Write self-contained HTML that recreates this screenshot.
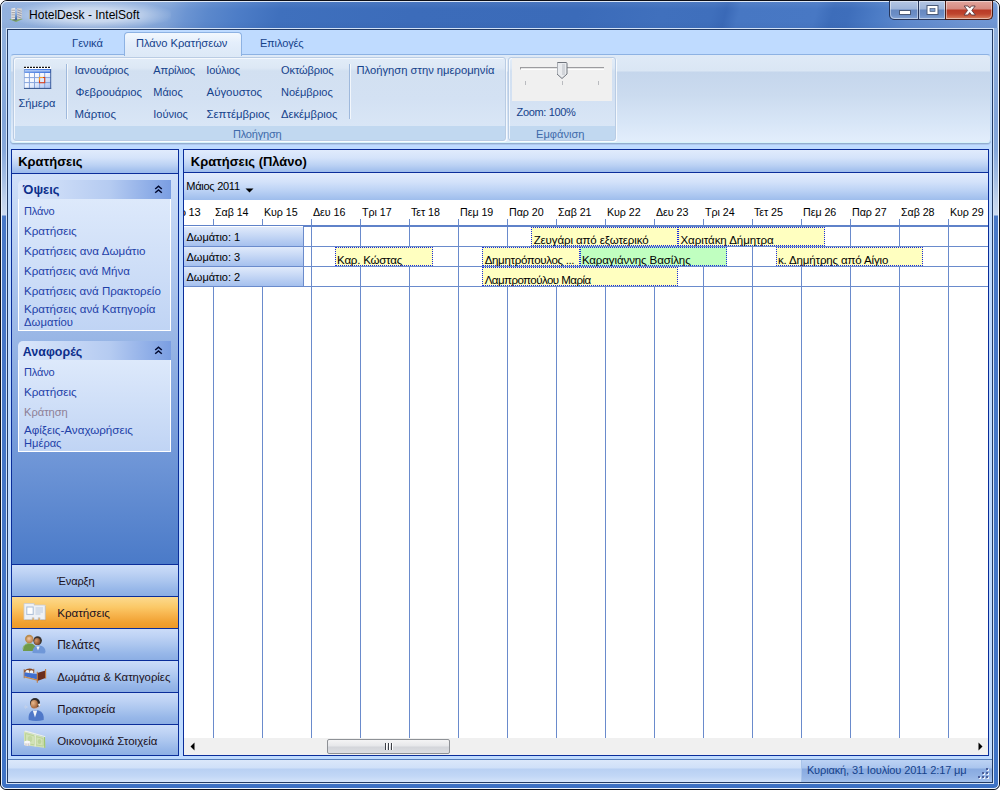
<!DOCTYPE html>
<html lang="el">
<head>
<meta charset="utf-8">
<title>HotelDesk - IntelSoft</title>
<style>
html,body{margin:0;padding:0;background:#fff;}
body{width:1000px;height:790px;position:relative;overflow:hidden;font-family:"Liberation Sans",sans-serif;font-size:11.5px;}
div,span,svg{position:absolute;box-sizing:border-box;}
.t{white-space:nowrap;line-height:16px;height:16px;}
/* window frame */
#win{left:0;top:0;width:1000px;height:790px;border:1px solid #0c0e16;border-radius:7px 7px 6px 6px;
 background:linear-gradient(180deg,#a3bee5 0px,#9fbbe3 175px,#5a88cf 200px,#4b7dcb 230px,#3f73c5 770px,#3c70c3 790px);
 box-shadow:inset 0 0 0 1px rgba(225,236,250,.85);overflow:hidden;}
#title{left:1px;top:1px;width:996px;height:27px;background:linear-gradient(105deg,#92b1de 0px,#8eaedd 140px,#7fa3d8 165px,#6b94d2 182px,#5b88cc 203px,#4d7dc7 232px,#3f70bd 272px,#3c6cba 400px,#3b6bb9 560px,#4070bd 640px,#3f6fbc 690px,#3a69b7 703px,#4777c3 716px,#4878c4 790px,#3d6dba 806px,#3e6ebb 822px,#4c7cc6 850px,#5e89cd 880px,#6e95d3 940px,#7399d5 996px);}
#titleshine{left:1px;top:1px;width:996px;height:27px;background:linear-gradient(180deg,rgba(255,255,255,.08) 0,rgba(255,255,255,0) 8px,rgba(0,0,40,0) 20px,rgba(0,0,40,.03) 27px);}
#glow{left:10px;top:0px;width:160px;height:28px;border-radius:14px;background:radial-gradient(ellipse at center,rgba(255,255,255,.62) 0,rgba(255,255,255,.5) 35%,rgba(255,255,255,.18) 60%,rgba(255,255,255,0) 75%);}
#cedge{left:6px;top:28px;width:988px;height:756px;border:1px solid #d3e2f6;}
#cedge2{left:7px;top:29px;width:986px;height:754px;border:1px solid #223a63;}
#client{left:8px;top:30px;width:984px;height:752px;background:#bfdbff;overflow:hidden;}
/* caption buttons */
.cb{top:1px;height:19px;border:1px solid #26355a;border-top:none;}
#bmin{left:889px;width:30px;border-radius:0 0 0 5px;background:linear-gradient(180deg,#b4c6e3 0,#9db4d9 8px,#6688c0 9px,#6c8ec6 14px,#84a5d6 18px);}
#bmax{left:918px;width:28px;background:linear-gradient(180deg,#b4c6e3 0,#9db4d9 8px,#6688c0 9px,#6c8ec6 14px,#84a5d6 18px);}
#bcls{left:945px;width:48px;border-radius:0 0 5px 0;border-color:#4a1c14;background:linear-gradient(180deg,#e2a59d 0,#d68a80 8px,#b93a26 9px,#bf452e 13px,#cf6a4c 16px,#d8886a 18px);}
.cbi{box-shadow:inset 0 0 0 1px rgba(255,255,255,.45);left:0;top:0;right:0;bottom:0;border-radius:inherit;}
/* ribbon */
#tabsel{left:124px;top:32px;width:118px;height:24px;border:1px solid #8db2e3;border-bottom:none;border-radius:4px 4px 0 0;background:linear-gradient(180deg,#f3f8fe 0,#e4eefb 10px,#dde9f7 22px);}
#ribbon{left:10px;top:54px;width:981px;height:89px;border:1px solid #8db2e3;border-color:#8db2e3 #b9d6f3 #d6f3fb #b9d6f3;border-radius:4px;background:linear-gradient(180deg,#dfeaf7 0,#dae6f4 16px,#c5d6ec 17px,#cbdbef 40px,#d8e6f7 68px,#e3eefc 88px);box-shadow:0 1px 0 #93accf, 0 2px 0 #adc8ee;}
.grp{top:57px;height:84px;border:1px solid #b9cce4;border-radius:3px;background:linear-gradient(180deg,#e2ecf8 0,#dde8f5 10px,#d2e0f1 13px,#d3e1f3 40px,#d9e6f6 68px,#c1d8f0 68px,#c1d8f0 84px);box-shadow:1px 1px 0 rgba(255,255,255,.75), inset 1px 1px 0 rgba(255,255,255,.7);}
.sep{width:1px;top:64px;height:55px;background:#9fb9dc;box-shadow:1px 0 0 rgba(255,255,255,.7);}
/* panels */
.panel{border:1px solid #0a2d9a;}
.phead{left:0;top:0;right:0;height:22px;background:linear-gradient(180deg,#e0ebfc 0,#d4e3fa 8px,#bcd2f4 15px,#9dbcec 22px);border-bottom:1px solid #0a2d9a;height:23px;}
#lbody{left:0;top:24px;width:166px;height:390px;background:linear-gradient(180deg,#d0e0f9 0,#9ab7e6 160px,#6f96d7 285px,#4a7ac8 391px);}
.ghead{left:6px;width:153px;height:19px;border-radius:5px 0 0 0;background:linear-gradient(90deg,#dbe7fb 0,#b5cbf1 60%,#7a9ee2 100%);}
.gbody{left:6px;width:153px;border:1px solid #fff;border-top:none;background:linear-gradient(180deg,#dde9fb 0,#c0d4f4 100%);}
.nav{left:0;width:166px;height:32px;border-top:1px solid #0a2d9a;background:linear-gradient(180deg,#cbdcf8 0,#bdd2f4 8px,#a9c4ee 17px,#98b8e9 24px,#8caee4 31px);}
.nav.sel{background:linear-gradient(180deg,#fcd98e 0,#fbc968 10px,#f7b34c 18px,#f0a030 26px,#ee9a28 31px);}
/* main */
#mtool{left:0;top:23px;width:804px;height:27px;background:linear-gradient(180deg,#e1ebfc 0,#d3e2fa 9px,#bdd3f5 17px,#9ebdec 27px);}
#mgrid{left:0;top:50px;width:804px;height:538px;background:#fff;overflow:hidden;}
.vl{top:0;width:1px;background:#6a8bcc;}
.hl{left:0;height:1px;background:#6a8bcc;}
.rh{left:0;width:120px;height:19px;border-right:1px solid #6a8bcc;background:linear-gradient(180deg,#e0eafb 0,#c5d7f5 9px,#a5c0ee 19px);}
.bk{height:19px;border:1px dotted #1a2be0;background:#ffffc0;}
#scroll{left:0;top:588px;width:804px;height:17px;background:#f0f0f0;}
#thumb{left:143px;top:1px;width:123px;height:15px;border:1px solid #8e9196;border-radius:2px;background:linear-gradient(180deg,#f4f4f5 0,#e6e7ea 6px,#d3d5da 7px,#dfe0e4 14px);}
#status{left:0;top:729px;width:984px;height:23px;border-top:1px solid #567db8;background:linear-gradient(180deg,#dbe8fa 0,#cfe0f8 8px,#b8d0f3 9px,#c2d7f6 16px,#d3e3fa 22px);}
#sdate{left:793px;top:0;width:191px;height:22px;border-left:1px solid #a9c4ea;background:linear-gradient(180deg,#bdd3f4 0,#aac5ee 8px,#88aae0 9px,#93b3e5 16px,#a3c0eb 22px);}
</style>
</head>
<body>
<div id="win">
 <div id="title" style="left:0;top:0"></div>
 <div id="glow"></div>
 <div id="titleshine" style="left:0;top:0"></div>
</div>
<div style="left:2px;top:28px;width:4px;height:757px;background:linear-gradient(180deg,#90b0dd 0,#82a5d9 92px,#86a8da 122px,#a5bfe4 152px,#c0d2ec 172px,#cddbef 187px,#4878c6 188px,#3f73c5 757px)"></div>
<div style="left:994px;top:28px;width:4px;height:757px;background:linear-gradient(180deg,#90b0dd 0,#82a5d9 92px,#86a8da 122px,#a5bfe4 152px,#c0d2ec 172px,#cddbef 187px,#4878c6 188px,#3f73c5 757px)"></div>
<div style="left:1px;top:1px;width:998px;height:788px;border:1px solid rgba(240,246,253,.88);border-radius:6px 6px 5px 5px"></div>
<div id="cedge"></div>
<div id="cedge2"></div>
<!-- caption buttons -->
<div id="bmin" class="cb"><div class="cbi"></div><svg width="30" height="19" style="left:-1px;top:0"><rect x="10.5" y="9.5" width="11" height="4" fill="#fff" stroke="#4a5a78" stroke-width="1"/></svg></div>
<div id="bmax" class="cb"><div class="cbi"></div><svg width="28" height="19" style="left:-1px;top:0"><rect x="9" y="4.5" width="11" height="9" fill="#fff" stroke="#4a5a78" stroke-width="1"/><rect x="12" y="7.500" width="5" height="3" fill="#7f9fd0" stroke="#4a5a78" stroke-width=".7"/></svg></div>
<div id="bcls" class="cb"><div class="cbi"></div><svg width="48" height="19" style="left:-1px;top:0"><path transform="translate(1.2,0.8)" d="M18 4.2 L21.800 4.2 L23.500 6.300 L25.200 4.2 L29 4.2 L25.600 8.600 L29.200 13.200 L25.300 13.200 L23.500 10.800 L21.700 13.200 L17.800 13.200 L21.400 8.600 Z" fill="#fff" stroke="#5a3a40" stroke-width=".9"/></svg></div>
<!-- app icon -->
<svg width="16" height="16" style="left:8px;top:7px" viewBox="0 0 16 16"><defs><linearGradient id="ab" x1="0" y1="0" x2="0" y2="1"><stop offset="0" stop-color="#b4cdee"/><stop offset=".5" stop-color="#7fa6dc"/><stop offset="1" stop-color="#34609f"/></linearGradient></defs>
<path d="M1.200 12.300 L7.600 10.800 L14.800 12 L8 15 Z" fill="#7fa868"/><path d="M3.500 12.400 L7.500 11.500 L10 12.800 L7 14 Z" fill="#5f6a78" opacity=".7"/>
<path d="M3.300 1.600 L7.200 0.800 L7.200 12 L3.300 12.600 Z" fill="#e6e6e6"/>
<path d="M9 1.200 L13.800 1.600 L13.800 11.600 L9 12.600 Z" fill="#d6d2cf"/>
<path d="M7.100 2 L9.100 2 L9.100 12.800 L7.100 12.800 Z" fill="url(#ab)"/>
<path d="M3.500 3.300h3.500M3.500 5.600h3.500M3.500 7.900h3.500M3.500 10.200h3.500" stroke="#a9a9ad" stroke-width="1.100"/>
<path d="M9.300 2.800l4.300 1.500M9.300 5.100l4.300 1.500M9.300 7.400l4.300 1.500M9.300 9.700l4.300 1.500" stroke="#8f98b4" stroke-width="1"/></svg>

<div id="client">
 <!-- everything inside client is offset by (8,30) -->
</div>

<!-- ribbon -->
<div id="ribbon"></div>
<div id="tabsel"></div>
<div class="grp" style="left:13px;width:493px"></div>
<div class="grp" style="left:508px;width:108px"></div>
<div class="sep" style="left:66px"></div>
<div class="sep" style="left:349px"></div>
<!-- calendar icon -->
<svg width="30" height="26" style="left:23px;top:65px" viewBox="0 0 30 26">
 <defs><linearGradient id="cg" x1="0" y1="0" x2="1" y2="1"><stop offset="0" stop-color="#ffffff"/><stop offset=".45" stop-color="#f2f6fe"/><stop offset="1" stop-color="#9fbcf2"/></linearGradient>
 <linearGradient id="ch" x1="0" y1="0" x2="1" y2="0"><stop offset="0" stop-color="#6f9aea"/><stop offset="1" stop-color="#3f74de"/></linearGradient></defs>
 <rect x="1" y="1.600" width="27" height="2.600" fill="#fff"/>
 <path d="M1 2.400h27" stroke="#111" stroke-width="1.300" stroke-dasharray="2 1"/>
 <rect x="1" y="4" width="27" height="4" fill="url(#ch)"/>
 <rect x="2" y="5" width="25" height="1.600" fill="#b4ccf5" opacity=".85"/>
 <rect x="1" y="8" width="27" height="15.500" fill="url(#cg)"/>
 <path d="M6.400 8v15.500M11.500 8v15.500M16.600 8v15.500M21.700 8v15.500M1 12.600h27M1 17.600h27" stroke="#86a4dc" stroke-width="1"/>
 <path d="M1.400 4v19.500" stroke="#8aa8dc" stroke-width=".8"/>
 <path d="M1 23.400h27.200" stroke="#2f4f88" stroke-width="1"/>
 <path d="M27.700 4v19.800" stroke="#40609f" stroke-width="1"/>
 <rect x="16.500" y="12.500" width="5.200" height="5.200" fill="#dcebff" stroke="#d8401c" stroke-width="1.100"/>
 <path d="M16.500 15.500v-3h3.500" fill="none" stroke="#f0a428" stroke-width="1.100"/>
</svg>
<!-- slider -->
<div style="left:512px;top:58px;width:100px;height:43px;background:#f0f0f0"></div>
<div style="left:520px;top:67px;width:84px;height:3px;background:#e6e6e6;border-top:1px solid #9c9c9f;border-left:1px solid #9c9c9f;border-bottom:1px solid #fff"></div>
<div style="left:525px;top:81px;width:1px;height:4px;background:#b9bbbf"></div>
<div style="left:562px;top:81px;width:1px;height:4px;background:#b9bbbf"></div>
<div style="left:598px;top:81px;width:1px;height:4px;background:#b9bbbf"></div>
<svg width="11" height="19" style="left:557px;top:61px" viewBox="0 0 11 19"><path d="M1.5 1.5 h8 a1 1 0 0 1 1 1 v10.5 l-5 4.5 l-5 -4.5 v-10.5 a1 1 0 0 1 1 -1 z" fill="#e9ebee" stroke="#6f747c" stroke-width="1" transform="translate(-.5,0)"/><path d="M5.5 3 v11" stroke="#c3c7ce" stroke-width="3" transform="translate(1,0)" opacity=".6"/></svg>

<!-- left panel -->
<div class="panel" id="lpanel" style="left:11px;top:149px;width:168px;height:607px">
 <div class="phead" style="height:24px"></div>
 <div id="lbody"></div>
 <div class="ghead" style="top:30px"></div>
 <div class="gbody" style="top:49px;height:132px"></div>
 <div class="ghead" style="top:191px"></div>
 <div class="gbody" style="top:210px;height:92px"></div>
 <svg width="9" height="9" style="left:142px;top:35px" viewBox="0 0 9 9"><path d="M1.2 4 L4.5 1.2 L7.800 4 M1.2 7.800 L4.5 5 L7.800 7.800" fill="none" stroke="#020a30" stroke-width="1.5"/></svg>
 <svg width="9" height="9" style="left:142px;top:196px" viewBox="0 0 9 9"><path d="M1.2 4 L4.5 1.2 L7.800 4 M1.2 7.800 L4.5 5 L7.800 7.800" fill="none" stroke="#020a30" stroke-width="1.5"/></svg>
 <div class="nav" style="top:414px"></div>
 <div class="nav sel" style="top:446px"></div>
 <div class="nav" style="top:478px"></div>
 <div class="nav" style="top:510px"></div>
 <div class="nav" style="top:542px"></div>
 <div class="nav" style="top:574px;height:31px"></div>
 <svg width="24" height="19" style="left:11px;top:452px" viewBox="0 0 24 19">
<path d="M1 1.5 h10.2 v1.6 h11 v14.4 h-5.2 v-1.8 h-1.8 v1.8 h-4.2 v-1.8 h-1.8 v1.8 h-8.2 z" fill="#8a7a60" opacity=".35" transform="translate(.8,.8)"/>
<path d="M1 1.5 h10.2 v1.6 h11 v14.4 h-5.2 v-1.8 h-1.8 v1.8 h-4.2 v-1.8 h-1.8 v1.8 h-8.2 z" fill="#eef1f5" stroke="#c9ccd2" stroke-width=".8"/>
<rect x="3.8" y="5" width="6.4" height="7.4" fill="#fff" stroke="#a9bcd6" stroke-width="1"/>
<path d="M12.5 6h7.5M12.5 8h7.5M12.5 10h7.5M12.5 12h5" stroke="#bccbe0" stroke-width="1"/>
</svg>
<svg width="25" height="22" style="left:10px;top:482px" viewBox="0 0 25 22">
<defs><radialGradient id="f1" cx=".4" cy=".35" r=".7"><stop offset="0" stop-color="#f3c9a0"/><stop offset="1" stop-color="#b8794a"/></radialGradient>
<radialGradient id="f2" cx=".35" cy=".35" r=".7"><stop offset="0" stop-color="#d99a6a"/><stop offset="1" stop-color="#7a4526"/></radialGradient></defs>
<path d="M1 19 c0-5 2.5-7.500 6.5-7.500 s6 2 6 5 l-1 2.500 h-10.5 z" fill="#6f9a4a"/>
<path d="M1 17.5 c0-4 2.5-6 6.5-6" fill="none" stroke="#8fb56a" stroke-width="1"/>
<circle cx="7.2" cy="7" r="4.2" fill="#b98c4e"/>
<circle cx="7.6" cy="7.6" r="3.2" fill="url(#f1)"/>
<path d="M10.5 21 c0-5 2-7.5 6.5-7.5 s6.500 3 6.500 6.5 l-1 1.500 z" fill="#6f97d8"/>
<path d="M14.300 14.500 l1.700 4 l1.700 -4 z" fill="#f2f5fa"/>
<circle cx="15.6" cy="8.6" r="4.300" fill="#3a3430"/>
<ellipse cx="15.200" cy="9.600" rx="3.100" ry="3.500" fill="url(#f2)"/>
</svg>
<svg width="25" height="17" style="left:11px;top:517px" viewBox="0 0 25 17">
<path d="M1.200 2.200 v9 M10.800 1.800 v4" stroke="#b0703a" stroke-width="1"/>
<path d="M1.200 3.500 q5 -3.500 9.600 -0.500 v3 l-9.600 -0.800 z" fill="#8a4a22"/>
<path d="M2.600 4 q1.800 -1.600 3.600 -0.400 v2.300 l-3.600 -0.300 z M6.800 3.900 q1.700 -1.200 3.400 0 v2.500 l-3.400 -0.400 z" fill="#f4f4f4"/>
<path d="M1.500 5.600 l12.800 1.300 v5.600 l-12.800 -3.200 z" fill="#3f6fd0"/>
<path d="M1.500 9.300 l12.800 3.200 v1.200 l-12.800 -3.200 z" fill="#c98a4a"/>
<path d="M14.300 6 l8.200 -2.400 v7.300 l-8.200 3 z" fill="#6a2e1e"/>
<path d="M14.300 4.800 v11 M22.600 2 v9.500" stroke="#c27a3c" stroke-width="1.100"/>
</svg>
<svg width="22" height="26" style="left:12px;top:545px" viewBox="0 0 22 26">
<defs><radialGradient id="f3" cx=".35" cy=".35" r=".7"><stop offset="0" stop-color="#eab98c"/><stop offset="1" stop-color="#9a5a30"/></radialGradient></defs>
<path d="M4.800 25 c-1-6.500 2-10 7-10 s8.800 3.500 7.800 10 q-7.500 2 -14.800 0z" fill="#4f78c8"/>
<path d="M8.800 15.500 l2.200 7 l2.200 -7 z" fill="#f4f6fa"/>
<circle cx="11" cy="8" r="5" fill="#2f2a28"/>
<ellipse cx="10.300" cy="9.300" rx="3.700" ry="4.300" fill="url(#f3)"/>
<path d="M14.800 9.500 q1.200 0 1.200 1.500 q-2 2.500 -5.500 2.500" fill="none" stroke="#d9b0a0" stroke-width=".8"/>
<rect x="14.300" y="8.500" width="1.800" height="2.600" rx=".8" fill="#eee"/>
<path d="M1.500 10.500 q-1.200 1.500 0 3 M3 11 q-.8 1 0 2" fill="none" stroke="#d0d6e4" stroke-width=".8"/>
</svg>
<svg width="24" height="19" style="left:11px;top:580px" viewBox="0 0 24 19">
<path d="M1 1.500 l1.500 -1 l20 5.800 l-.5 .8 z" fill="#eef0e8"/>
<path d="M1 1.500 L22 7.300 L22.300 18 L1 15 Z" fill="#d2e2b6"/>
<path d="M2.500 3.500 L11.500 6 L11.500 14.800 L2.500 13.500 Z M13 6.600 L20 8.500 L20.200 16 L13 15 Z" fill="none" stroke="#bcd49a" stroke-width="1"/>
<path d="M12.200 4.600 V16.600" stroke="#e6eed8" stroke-width="1.200"/>
<ellipse cx="7" cy="9" rx="2.200" ry="3" fill="#c2d8a2"/><ellipse cx="16.500" cy="11.500" rx="1.800" ry="2.600" fill="#bcd49a"/>
<path d="M21 7 L22 7.300 L22.300 18 L21.200 17.800 Z" fill="#9cc46c"/>
<path d="M1.200 12 q3 -2.600 6 0 v3 q-3 2 -6 0 z" fill="#e8e8ea"/>
<ellipse cx="4.200" cy="12" rx="3" ry="1.300" fill="#f8f8f8"/>
<path d="M3 13.500v2.500M5.400 13.500v2.500" stroke="#d2c4c0" stroke-width=".8"/>
</svg>
</div>

<!-- main panel -->
<div class="panel" id="mpanel" style="left:183px;top:149px;width:806px;height:607px">
 <div class="phead"></div>
 <div id="mtool"></div>
 <svg width="9" height="5" style="left:61px;top:38px" viewBox="0 0 9 5"><path d="M0.5 0.5 L8.5 0.5 L4.5 4.5 Z" fill="#000"/></svg>
 <div id="mgrid">
  <div class="vl" style="left:29px;top:19px;height:520px"></div>
<div class="vl" style="left:78px;top:19px;height:520px"></div>
<div class="vl" style="left:127px;top:19px;height:520px"></div>
<div class="vl" style="left:176px;top:19px;height:520px"></div>
<div class="vl" style="left:225px;top:19px;height:520px"></div>
<div class="vl" style="left:274px;top:19px;height:520px"></div>
<div class="vl" style="left:323px;top:19px;height:520px"></div>
<div class="vl" style="left:372px;top:19px;height:520px"></div>
<div class="vl" style="left:421px;top:19px;height:520px"></div>
<div class="vl" style="left:470px;top:19px;height:520px"></div>
<div class="vl" style="left:519px;top:19px;height:520px"></div>
<div class="vl" style="left:568px;top:19px;height:520px"></div>
<div class="vl" style="left:617px;top:19px;height:520px"></div>
<div class="vl" style="left:666px;top:19px;height:520px"></div>
<div class="vl" style="left:715px;top:19px;height:520px"></div>
<div class="vl" style="left:764px;top:19px;height:520px"></div>
<div class="hl" style="top:25px;width:804px;height:2px;background:#5f82c9"></div>
<div style="left:0;top:26px;width:119px;height:1px;background:#fff"></div>
<div class="hl" style="top:46px;width:804px"></div>
<div class="hl" style="top:66px;width:804px"></div>
<div class="hl" style="top:86px;width:804px"></div>
<div class="rh" style="top:27px"></div>
<div class="rh" style="top:47px"></div>
<div class="rh" style="top:67px"></div>
<div class="bk" style="left:347px;top:27px;width:147px;background:#ffffc0"></div>
<div class="bk" style="left:494px;top:27px;width:147px;background:#ffffc0"></div>
<div class="bk" style="left:151px;top:47px;width:98px;background:#ffffc0"></div>
<div class="bk" style="left:298px;top:47px;width:98px;background:#ffffc0"></div>
<div class="bk" style="left:396px;top:47px;width:147px;background:#c0ffc0"></div>
<div class="bk" style="left:592px;top:47px;width:147px;background:#ffffc0"></div>
<div class="bk" style="left:298px;top:67px;width:196px;background:#ffffc0"></div>
 </div>
 <div id="scroll">
  <div id="thumb"></div>
  <div style="left:201px;top:5px;width:1px;height:7px;background:#3c3f46;box-shadow:1px 0 0 #fff"></div>
  <div style="left:204px;top:5px;width:1px;height:7px;background:#3c3f46;box-shadow:1px 0 0 #fff"></div>
  <div style="left:207px;top:5px;width:1px;height:7px;background:#3c3f46;box-shadow:1px 0 0 #fff"></div>
  <svg width="5" height="9" style="left:6px;top:4px" viewBox="0 0 5 9"><path d="M4.5 0.5 L0.5 4.5 L4.5 8.5 Z" fill="#000"/></svg>
  <svg width="5" height="9" style="left:794px;top:4px" viewBox="0 0 5 9"><path d="M0.5 0.5 L4.5 4.5 L0.5 8.5 Z" fill="#000"/></svg>
 </div>
</div>

<!-- status bar -->
<div id="status" style="left:8px;top:759px">
 <div id="sdate"></div>
 <svg width="12" height="12" style="left:970px;top:8px" viewBox="0 0 12 12"><g fill="#4a5f9a"><rect x="8" y="0" width="2" height="2"/><rect x="4" y="4" width="2" height="2"/><rect x="8" y="4" width="2" height="2"/><rect x="0" y="8" width="2" height="2"/><rect x="4" y="8" width="2" height="2"/><rect x="8" y="8" width="2" height="2"/></g><g fill="#fff" opacity=".8"><rect x="9" y="1" width="2" height="2"/><rect x="5" y="5" width="2" height="2"/><rect x="9" y="5" width="2" height="2"/><rect x="1" y="9" width="2" height="2"/><rect x="5" y="9" width="2" height="2"/><rect x="9" y="9" width="2" height="2"/></g><g fill="#4a5f9a"><rect x="8" y="0" width="2" height="2"/><rect x="4" y="4" width="2" height="2"/><rect x="8" y="4" width="2" height="2"/><rect x="0" y="8" width="2" height="2"/><rect x="4" y="8" width="2" height="2"/><rect x="8" y="8" width="2" height="2"/></g></svg>
</div>

<span class="t" style="left:29.0px;top:6.5px;font-size:12.05px;letter-spacing:0.00px;color:#000">HotelDesk - IntelSoft</span>
<span class="t" style="left:72.0px;top:35.1px;font-size:11.13px;letter-spacing:0.00px;color:#15428b">Γενικά</span>
<span class="t" style="left:135.9px;top:35.1px;font-size:11.13px;letter-spacing:0.00px;color:#15428b">Πλάνο Κρατήσεων</span>
<span class="t" style="left:259.9px;top:35.2px;font-size:11.04px;letter-spacing:-0.13px;color:#15428b">Επιλογές</span>
<span class="t" style="left:18.5px;top:95.2px;font-size:11.07px;letter-spacing:0.00px;color:#15428b">Σήμερα</span>
<span class="t" style="left:74.5px;top:62.1px;font-size:11.2px;letter-spacing:0.00px;color:#15428b">Ιανουάριος</span>
<span class="t" style="left:75.5px;top:84.1px;font-size:11.27px;letter-spacing:0.00px;color:#15428b">Φεβρουάριος</span>
<span class="t" style="left:74.5px;top:106.0px;font-size:11.46px;letter-spacing:0.00px;color:#15428b">Μάρτιος</span>
<span class="t" style="left:153.3px;top:62.2px;font-size:11.04px;letter-spacing:-0.19px;color:#15428b">Απρίλιος</span>
<span class="t" style="left:153.3px;top:84.2px;font-size:11.04px;letter-spacing:-0.01px;color:#15428b">Μάιος</span>
<span class="t" style="left:153.3px;top:106.2px;font-size:11.04px;letter-spacing:-0.01px;color:#15428b">Ιούνιος</span>
<span class="t" style="left:206.3px;top:62.2px;font-size:11.04px;letter-spacing:-0.15px;color:#15428b">Ιούλιος</span>
<span class="t" style="left:206.5px;top:84.0px;font-size:11.44px;letter-spacing:-0.00px;color:#15428b">Αύγουστος</span>
<span class="t" style="left:206.5px;top:106.1px;font-size:11.35px;letter-spacing:0.00px;color:#15428b">Σεπτέμβριος</span>
<span class="t" style="left:281.0px;top:62.2px;font-size:11.04px;letter-spacing:-0.10px;color:#15428b">Οκτώβριος</span>
<span class="t" style="left:281.0px;top:84.2px;font-size:11.04px;letter-spacing:-0.02px;color:#15428b">Νοέμβριος</span>
<span class="t" style="left:281.0px;top:106.1px;font-size:11.21px;letter-spacing:0.00px;color:#15428b">Δεκέμβριος</span>
<span class="t" style="left:356.5px;top:62.1px;font-size:11.21px;letter-spacing:0.00px;color:#15428b">Πλοήγηση στην ημερομηνία</span>
<span class="t" style="left:232.9px;top:125.7px;font-size:11.04px;letter-spacing:-0.20px;color:#3e6aaa">Πλοήγηση</span>
<span class="t" style="left:516.5px;top:104.2px;font-size:11.04px;letter-spacing:-0.35px;color:#15428b">Zoom: 100%</span>
<span class="t" style="left:536.0px;top:125.7px;font-size:11.11px;letter-spacing:0.00px;color:#3e6aaa">Εμφάνιση</span>
<span class="t" style="left:18.2px;top:154.1px;font-size:12.94px;letter-spacing:0.00px;color:#000;font-weight:bold">Κρατήσεις</span>
<span class="t" style="left:22.8px;top:182.0px;font-size:12.87px;letter-spacing:0.01px;color:#0d2f8c;font-weight:bold">Όψεις</span>
<span class="t" style="left:24.0px;top:202.9px;font-size:11.04px;letter-spacing:-0.17px;color:#1e3fa8">Πλάνο</span>
<span class="t" style="left:24.0px;top:222.7px;font-size:11.63px;letter-spacing:0.00px;color:#1e3fa8">Κρατήσεις</span>
<span class="t" style="left:24.0px;top:242.7px;font-size:11.61px;letter-spacing:0.00px;color:#1e3fa8">Κρατήσεις ανα Δωμάτιο</span>
<span class="t" style="left:24.0px;top:262.7px;font-size:11.49px;letter-spacing:0.00px;color:#1e3fa8">Κρατήσεις ανά Μήνα</span>
<span class="t" style="left:24.0px;top:282.7px;font-size:11.54px;letter-spacing:0.01px;color:#1e3fa8">Κρατήσεις ανά Πρακτορείο</span>
<span class="t" style="left:24.0px;top:301.3px;font-size:11.58px;letter-spacing:0.00px;color:#1e3fa8">Κρατήσεις ανά Κατηγορία</span>
<span class="t" style="left:24.0px;top:314.1px;font-size:11.31px;letter-spacing:0.01px;color:#1e3fa8">Δωματίου</span>
<span class="t" style="left:22.8px;top:343.7px;font-size:12.45px;letter-spacing:0.01px;color:#0d2f8c;font-weight:bold">Αναφορές</span>
<span class="t" style="left:24.0px;top:364.2px;font-size:11.04px;letter-spacing:-0.17px;color:#1e3fa8">Πλάνο</span>
<span class="t" style="left:24.0px;top:383.8px;font-size:11.63px;letter-spacing:0.00px;color:#1e3fa8">Κρατήσεις</span>
<span class="t" style="left:24.0px;top:404.1px;font-size:11.12px;letter-spacing:0.00px;color:#8d7f96">Κράτηση</span>
<span class="t" style="left:24.0px;top:421.7px;font-size:11.63px;letter-spacing:0.00px;color:#1e3fa8">Αφίξεις-Αναχωρήσεις</span>
<span class="t" style="left:24.0px;top:434.5px;font-size:11.12px;letter-spacing:0.00px;color:#1e3fa8">Ημέρας</span>
<span class="t" style="left:57.2px;top:573.1px;font-size:11.04px;letter-spacing:-0.10px;color:#1a1020">Έναρξη</span>
<span class="t" style="left:57.2px;top:604.9px;font-size:11.6px;letter-spacing:0.01px;color:#1a1020">Κρατήσεις</span>
<span class="t" style="left:57.2px;top:636.8px;font-size:11.96px;letter-spacing:0.00px;color:#1a1020">Πελάτες</span>
<span class="t" style="left:57.2px;top:669.0px;font-size:11.35px;letter-spacing:0.00px;color:#1a1020">Δωμάτια &amp; Κατηγορίες</span>
<span class="t" style="left:57.2px;top:701.0px;font-size:11.38px;letter-spacing:0.00px;color:#1a1020">Πρακτορεία</span>
<span class="t" style="left:57.2px;top:732.9px;font-size:11.47px;letter-spacing:0.00px;color:#1a1020">Οικονομικά Στοιχεία</span>
<span class="t" style="left:190.8px;top:154.1px;font-size:12.94px;letter-spacing:0.00px;color:#000;font-weight:bold">Κρατήσεις (Πλάνο)</span>
<span class="t" style="left:186.3px;top:178.2px;font-size:11.04px;letter-spacing:-0.28px;color:#000">Μάιος 2011</span>
<div style="left:184px;top:200px;width:40px;height:25px;overflow:hidden"><span class="t" style="left:-18.2px;top:3.7px;font-size:11.04px;letter-spacing:-0.24px;color:#000">Παρ 13</span></div>
<span class="t" style="left:215.0px;top:203.8px;font-size:10.7px;letter-spacing:-0.05px;color:#000">Σαβ 14</span>
<span class="t" style="left:264.0px;top:203.8px;font-size:10.7px;letter-spacing:-0.05px;color:#000">Κυρ 15</span>
<span class="t" style="left:313.0px;top:203.8px;font-size:10.7px;letter-spacing:-0.05px;color:#000">Δευ 16</span>
<span class="t" style="left:362.0px;top:203.8px;font-size:10.7px;letter-spacing:-0.05px;color:#000">Τρι 17</span>
<span class="t" style="left:411.0px;top:203.8px;font-size:10.7px;letter-spacing:-0.05px;color:#000">Τετ 18</span>
<span class="t" style="left:460.0px;top:203.8px;font-size:10.7px;letter-spacing:-0.05px;color:#000">Πεμ 19</span>
<span class="t" style="left:509.0px;top:203.8px;font-size:10.7px;letter-spacing:-0.05px;color:#000">Παρ 20</span>
<span class="t" style="left:558.0px;top:203.8px;font-size:10.7px;letter-spacing:-0.05px;color:#000">Σαβ 21</span>
<span class="t" style="left:607.0px;top:203.8px;font-size:10.7px;letter-spacing:-0.05px;color:#000">Κυρ 22</span>
<span class="t" style="left:656.0px;top:203.8px;font-size:10.7px;letter-spacing:-0.05px;color:#000">Δευ 23</span>
<span class="t" style="left:705.0px;top:203.8px;font-size:10.7px;letter-spacing:-0.05px;color:#000">Τρι 24</span>
<span class="t" style="left:754.0px;top:203.8px;font-size:10.7px;letter-spacing:-0.05px;color:#000">Τετ 25</span>
<span class="t" style="left:803.0px;top:203.8px;font-size:10.7px;letter-spacing:-0.05px;color:#000">Πεμ 26</span>
<span class="t" style="left:852.0px;top:203.8px;font-size:10.7px;letter-spacing:-0.05px;color:#000">Παρ 27</span>
<span class="t" style="left:901.0px;top:203.8px;font-size:10.7px;letter-spacing:-0.05px;color:#000">Σαβ 28</span>
<span class="t" style="left:950.0px;top:203.8px;font-size:10.7px;letter-spacing:-0.05px;color:#000">Κυρ 29</span>
<span class="t" style="left:186.5px;top:228.7px;font-size:11.04px;letter-spacing:-0.03px;color:#000">Δωμάτιο: 1</span>
<span class="t" style="left:186.5px;top:248.7px;font-size:11.04px;letter-spacing:-0.03px;color:#000">Δωμάτιο: 3</span>
<span class="t" style="left:186.5px;top:268.7px;font-size:11.04px;letter-spacing:-0.03px;color:#000">Δωμάτιο: 2</span>
<span class="t" style="left:533.7px;top:232.2px;font-size:11.52px;letter-spacing:-0.12px;color:#000">Ζευγάρι από εξωτερικό</span>
<span class="t" style="left:680.5px;top:232.2px;font-size:11.52px;letter-spacing:-0.06px;color:#000">Χαριτάκη Δήμητρα</span>
<span class="t" style="left:337.1px;top:252.2px;font-size:11.52px;letter-spacing:-0.22px;color:#000">Καρ. Κώστας</span>
<span class="t" style="left:484.7px;top:252.2px;font-size:11.52px;letter-spacing:-0.34px;color:#000">Δημητρόπουλος ...</span>
<span class="t" style="left:581.9px;top:252.2px;font-size:11.52px;letter-spacing:-0.11px;color:#000">Καραγιάννης Βασίλης</span>
<span class="t" style="left:777.9px;top:252.2px;font-size:11.52px;letter-spacing:-0.15px;color:#000">κ. Δημήτρης από Αίγιο</span>
<span class="t" style="left:484.7px;top:272.2px;font-size:11.52px;letter-spacing:-0.55px;color:#000">Λαμπροπούλου Μαρία</span>
<span class="t" style="left:806.9px;top:762.2px;font-size:11.04px;letter-spacing:-0.14px;color:#15428b">Κυριακή, 31 Ιουλίου 2011 2:17 μμ</span>
</body>
</html>
